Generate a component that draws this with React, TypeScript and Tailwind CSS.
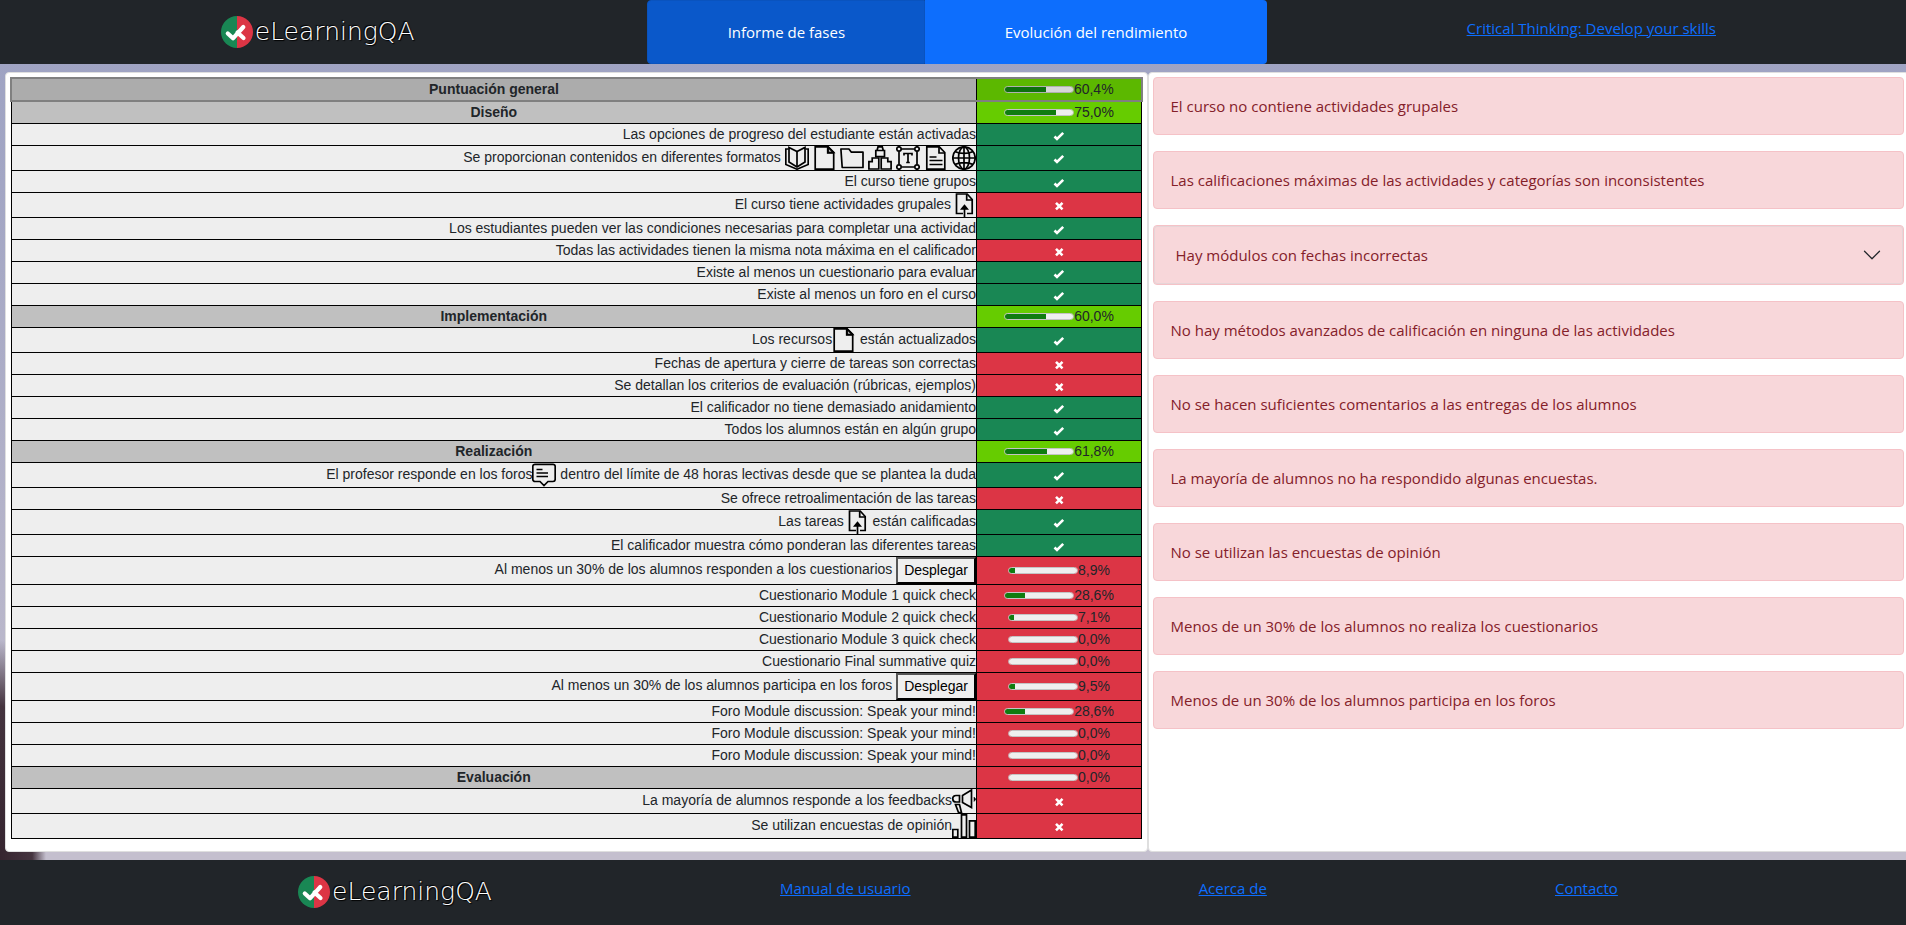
import React from "react";

type Result = "ok" | "bad" | number;

function Svg({ children }: { children: React.ReactNode }) {
  return (
    <svg viewBox="0 0 24 24" fill="none" stroke="#000" strokeWidth="1.7" className="inline-block size-6 overflow-hidden align-middle" aria-hidden="true">
      {children}
    </svg>
  );
}

const BookIcon = () => (
  <Svg>
    <path d="M4 1.5 12 5.5l8-4v14.5l-8 5-8-5Z" />
    <path d="M12 5.5V21" />
    <path d="M3.500 3H.8v15.500L12 23.200l11.200-4.700V3h-2.700" />
  </Svg>
);
const PageIcon = () => (
  <Svg>
    <path d="M2.200.8h13l5.500 5.500v16.900H2.200Z" />
    <path d="M14.700 1v6h6" />
    <path d="M15 1l5.500 5.500H15Z" fill="#000" fillOpacity=".25" />
  </Svg>
);
const FolderIcon = () => (
  <Svg>
    <path d="M.9 3h8l2.500 3.200H23v15.300H2.200Z" strokeLinejoin="round" />
  </Svg>
);
const PackageIcon = () => (
  <Svg>
    <path d="M7.800 4.500h8.700v6.200H7.800ZM9 4.500 10 .9h4.300l1 3.600" />
    <path d="M.9 23v-7.300h3.300V12h6.600v11Z" />
    <path d="M13.200 23V12h6.600v3.700h3.300V23Z" />
  </Svg>
);
const LabelIcon = () => (
  <Svg>
    <path d="M5.500 3h13M5.500 21h13M3 5.500v13M21 5.500v13" />
    <circle cx="3" cy="3" r="2.200" />
    <circle cx="21" cy="3" r="2.200" />
    <circle cx="3" cy="21" r="2.200" />
    <circle cx="21" cy="21" r="2.200" />
    <path d="M8 9.500V7.500h8v2M12 7.500v9M10.200 16.500h3.600" />
  </Svg>
);
const TextPageIcon = () => (
  <Svg>
    <path d="M2.800.8h12.500l5.500 5.700v16.700H2.800Z" />
    <path d="M15 1v6h5.500M5.500 11h7M5.500 14.500h13M5.500 18.500h13" />
  </Svg>
);
const GlobeIcon = () => (
  <Svg>
    <circle cx="12" cy="12" r="11.200" />
    <ellipse cx="12" cy="12" rx="5.500" ry="11.200" />
    <path d="M.8 12h22.400M12 .8v22.400M3 5.500c4.500 2.600 13.500 2.600 18 0M3 18.500c4.500-2.600 13.500-2.600 18 0" />
  </Svg>
);
const UploadIcon = () => (
  <svg viewBox="3 0 21 24" fill="none" stroke="#000" strokeWidth="1.7" className="inline-block h-6 w-[21px] overflow-hidden align-middle" aria-hidden="true">
    <path d="M11 20.500H4.500V1h10.700l5 5.500v14H15" />
    <path d="M14.700 1v6h5.300" />
    <path d="M12.500 24V13" />
    <path d="M9.800 15.800 12.500 12.500l2.700 3.300Z" fill="#000" />
  </svg>
);
const ForumIcon = () => (
  <Svg>
    <path d="M3 1.300h18a2.200 2.200 0 0 1 2.200 2.200v12.800a2.200 2.200 0 0 1-2.200 2.200h-5l-4 4-4-4H3a2.200 2.200 0 0 1-2.200-2.200V3.500A2.200 2.200 0 0 1 3 1.300Z" />
    <path d="M4.500 6.500h6M4.500 10h11.500M4.500 13.500h11.500" />
  </Svg>
);
const MegaphoneIcon = () => (
  <Svg>
    <path d="M7.500 6.500H4a3.200 3.200 0 0 0 0 6.500h3.500Z" />
    <path d="M10.500 6.500 19.500 1v17.500l-9-5Z" />
    <path d="M3.500 15.500h4l2 8H6.500Z" />
    <path d="M22 8v4.500l2-2.200Z" fill="#000" strokeWidth=".5" />
  </Svg>
);
const ChartIcon = () => (
  <Svg>
    <path d="M.8 15.500h5v7.700h-5ZM9.500.8h5v22.400h-5ZM17.500 6.800h5.700v16.400h-5.700Z" />
  </Svg>
);

const CheckMark = () => (
  <svg viewBox="0 -2 12 12" className="mx-auto block size-3" role="img" aria-label="Correcto">
    <path d="M1.500 5.500 4 8 10.200 1.800" fill="none" stroke="#fff" strokeWidth="2.600" />
  </svg>
);
const CrossMark = () => (
  <svg viewBox="0 -2 12 12" className="mx-auto block size-3" role="img" aria-label="Incorrecto">
    <path d="M3 1.800l6.500 6.500M9.500 1.800 3 8.300" fill="none" stroke="#fff" strokeWidth="2.600" />
  </svg>
);

const Desplegar = () => (
  <button
    type="button"
    className="h-[27px] border-2 border-t-[#555] border-r-black border-b-black border-l-[#555] bg-[#efefef] px-1.5 align-middle text-black"
  >
    Desplegar
  </button>
);

interface Row {
  label: React.ReactNode;
  result: Result;
  heading?: boolean;
}

const rows: Row[] = [
  { label: "Diseño", result: 75, heading: true },
  { label: "Las opciones de progreso del estudiante están activadas", result: "ok" },
  {
    label: (
      <>
        Se proporcionan contenidos en diferentes formatos <BookIcon /> <PageIcon /> <FolderIcon /> <PackageIcon /> <LabelIcon />{" "}
        <TextPageIcon /> <GlobeIcon />
      </>
    ),
    result: "ok",
  },
  { label: "El curso tiene grupos", result: "ok" },
  { label: <>El curso tiene actividades grupales <UploadIcon /></>, result: "bad" },
  { label: "Los estudiantes pueden ver las condiciones necesarias para completar una actividad", result: "ok" },
  { label: "Todas las actividades tienen la misma nota máxima en el calificador", result: "bad" },
  { label: "Existe al menos un cuestionario para evaluar", result: "ok" },
  { label: "Existe al menos un foro en el curso", result: "ok" },
  { label: "Implementación", result: 60, heading: true },
  { label: <>Los recursos<PageIcon /> están actualizados</>, result: "ok" },
  { label: "Fechas de apertura y cierre de tareas son correctas", result: "bad" },
  { label: "Se detallan los criterios de evaluación (rúbricas, ejemplos)", result: "bad" },
  { label: "El calificador no tiene demasiado anidamiento", result: "ok" },
  { label: "Todos los alumnos están en algún grupo", result: "ok" },
  { label: "Realización", result: 61.8, heading: true },
  {
    label: <>El profesor responde en los foros<ForumIcon /> dentro del límite de 48 horas lectivas desde que se plantea la duda</>,
    result: "ok",
  },
  { label: "Se ofrece retroalimentación de las tareas", result: "bad" },
  { label: <>Las tareas <UploadIcon /> están calificadas</>, result: "ok" },
  { label: "El calificador muestra cómo ponderan las diferentes tareas", result: "ok" },
  { label: <>Al menos un 30% de los alumnos responden a los cuestionarios <Desplegar /></>, result: 8.9 },
  { label: "Cuestionario Module 1 quick check", result: 28.6 },
  { label: "Cuestionario Module 2 quick check", result: 7.1 },
  { label: "Cuestionario Module 3 quick check", result: 0 },
  { label: "Cuestionario Final summative quiz", result: 0 },
  { label: <>Al menos un 30% de los alumnos participa en los foros <Desplegar /></>, result: 9.5 },
  { label: "Foro Module discussion: Speak your mind!", result: 28.6 },
  { label: "Foro Module discussion: Speak your mind!", result: 0 },
  { label: "Foro Module discussion: Speak your mind!", result: 0 },
  { label: "Evaluación", result: 0, heading: true },
  { label: <>La mayoría de alumnos responde a los feedbacks<MegaphoneIcon /></>, result: "bad" },
  { label: <>Se utilizan encuestas de opinión<ChartIcon /></>, result: "bad" },
];

const progressBase =
  "h-[7px] w-[70px] appearance-none overflow-hidden rounded-full border border-[#c4c4c4] bg-[#efefef] [&::-webkit-progress-bar]:bg-[#efefef] [&::-webkit-progress-value]:bg-[#107c10]";

function Score({ value, dimmed }: { value: number; dimmed?: boolean }) {
  const text = `${value.toFixed(1).replace(".", ",")}%`;
  return (
    <div className="flex items-center justify-center">
      <progress className={`${progressBase} ${dimmed ? "brightness-90" : ""}`} max={100} value={value} aria-label={text} />
      <span>{text}</span>
    </div>
  );
}

function resultColor(r: Result) {
  if (r === "ok") return "bg-[#198754]";
  if (r === "bad") return "bg-[#dc3545]";
  return r >= 50 ? "bg-[#66cc00]" : "bg-[#dc3545]";
}

function PhaseTable() {
  return (
    <table className="w-full border-collapse text-sm leading-[21px] font-['Liberation_Sans',Arial,sans-serif] text-[#212529]">
      <thead>
        <tr className="border-2 border-[#808080]">
          <th scope="col" className="border border-black bg-[#acacac] p-0 text-center font-bold">Puntuación general</th>
          <td className="w-[165px] border border-black bg-[#5cb800] p-0">
            <Score value={60.4} dimmed />
          </td>
        </tr>
      </thead>
      <tbody>
        {rows.map((row, i) => (
          <tr key={i}>
            {row.heading ? (
              <th scope="row" className="border border-black bg-[#c0c0c0] p-0 text-center font-bold">{row.label}</th>
            ) : (
              <td className="border border-black bg-[#eeeeee] p-0 text-right">{row.label}</td>
            )}
            <td className={`border border-black p-0 ${resultColor(row.result)}`}>
              {row.result === "ok" ? <CheckMark /> : row.result === "bad" ? <CrossMark /> : <Score value={row.result} />}
            </td>
          </tr>
        ))}
      </tbody>
    </table>
  );
}

const alerts: { text: string; expandable?: boolean }[] = [
  { text: "El curso no contiene actividades grupales" },
  { text: "Las calificaciones máximas de las actividades y categorías son inconsistentes" },
  { text: "Hay módulos con fechas incorrectas", expandable: true },
  { text: "No hay métodos avanzados de calificación en ninguna de las actividades" },
  { text: "No se hacen suficientes comentarios a las entregas de los alumnos" },
  { text: "La mayoría de alumnos no ha respondido algunas encuestas." },
  { text: "No se utilizan las encuestas de opinión" },
  { text: "Menos de un 30% de los alumnos no realiza los cuestionarios" },
  { text: "Menos de un 30% de los alumnos participa en los foros" },
];

function Alert({ text, expandable }: { text: string; expandable?: boolean }) {
  const box = "rounded border border-[#f5c2c7] bg-[#f8d7da] text-[#842029]";
  if (expandable) {
    return (
      <div className={box}>
        <button type="button" aria-expanded="false" className="flex w-full items-center justify-between rounded-[3px] border border-[#e6d5d8] py-4 pr-5 pl-[21px] text-left">
          <span>{text}</span>
          <svg viewBox="0 0 16 16" className="size-5" fill="none" stroke="#212529" strokeLinecap="round" strokeLinejoin="round" aria-hidden="true">
            <path d="M2 5l6 6 6-6" />
          </svg>
        </button>
      </div>
    );
  }
  return <div role="alert" className={`${box} px-[17px] py-4`}>{text}</div>;
}

function Logo() {
  return (
    <div className="flex h-8 items-center gap-0.5">
      <svg viewBox="0 0 32 32" className="size-8" aria-hidden="true">
        <path d="M16 0a16 16 0 0 0 0 32Z" fill="#198754" />
        <path d="M16 0a16 16 0 0 1 0 32Z" fill="#dc3545" />
        <path d="M6.800 17.500 12 22.300 22.300 11M16.500 16.500l6 5.500" fill="none" stroke="#fff" strokeWidth="4.200" strokeLinecap="round" strokeLinejoin="round" />
      </svg>
      <span className="text-[25px] leading-8 font-extralight text-white font-['DejaVu_Sans',sans-serif] [text-shadow:1px_1px_1px_#000,-1px_-1px_1px_#000]">
        eLearningQA
      </span>
    </div>
  );
}

const link = "text-[#0d6efd] underline";

export default function App() {
  return (
    <div className="flex min-h-screen flex-col overflow-x-hidden bg-[radial-gradient(ellipse_46px_220px_at_0px_860px,#35242f_0%,#45343f_70%,transparent_100%),linear-gradient(180deg,#9da2c2_0%,#a3a6c4_20%,#c4bfce_92%)] text-[15px] leading-6 font-['Open_Sans','Noto_Sans',sans-serif]">
      <header className="grid grid-cols-3 bg-[#212529]">
        <div className="flex items-center justify-center">
          <Logo />
        </div>
        <nav className="flex h-16 pr-1 pl-3">
          <button type="button" aria-pressed="true" className="flex-auto rounded-l border border-[#0a53be] bg-[#0a58ca] px-3 text-white">
            Informe de fases
          </button>
          <button type="button" className="flex-auto rounded-r bg-[#0d6efd] px-3 text-white">
            Evolución del rendimiento
          </button>
        </nav>
        <div className="flex items-start justify-center pt-4 pl-1.5">
          <a href="#curso" className={link}>Critical Thinking: Develop your skills</a>
        </div>
      </header>
      <main className="my-2 flex flex-1 pl-[5px]">
        <section className="w-[60.1%] rounded border border-[#dfdfdf] bg-white p-1">
          <PhaseTable />
        </section>
        <section className="-mr-[3px] flex flex-1 flex-col gap-4 rounded border border-[#dfdfdf] bg-white p-1">
          {alerts.map((a) => (
            <Alert key={a.text} {...a} />
          ))}
        </section>
      </main>
      <footer className="flex items-start justify-evenly bg-[#212529] pt-4 pb-[17px]">
        <div className="pl-2.5">
          <Logo />
        </div>
        <a href="#manual" className={link}>Manual de usuario</a>
        <a href="#acerca" className={link}>Acerca de</a>
        <a href="#contacto" className={link}>Contacto</a>
      </footer>
    </div>
  );
}
